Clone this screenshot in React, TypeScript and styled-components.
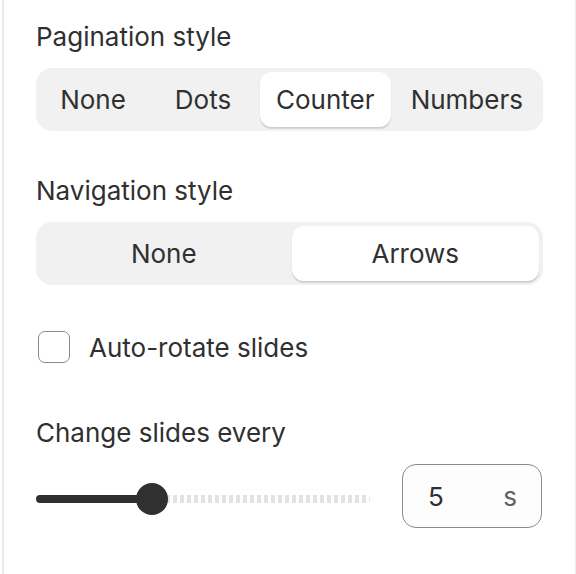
import React, { useState } from "react";
import styled, { createGlobalStyle } from "styled-components";

const Global = createGlobalStyle`
  html, body { margin: 0; padding: 0; background: #ffffff; }
  body { font-family: Inter, "Noto Sans", "Liberation Sans", sans-serif; color: #303030; }
  * { box-sizing: border-box; }
`;

const Panel = styled.div`
  margin-left: 2px;
  width: 574px;
  height: 574px;
  border-left: 2px solid #ebebeb;
  border-right: 1px solid #ededed;
  padding: 22px 32px 0 32px;
  display: flex;
  flex-direction: column;
`;

const Section = styled.div<{ $top?: number }>`
  display: flex;
  flex-direction: column;
  gap: 16px;
  margin-top: ${(p) => p.$top ?? 0}px;
`;

const Label = styled.div`
  font-size: 26px;
  line-height: 30px;
  color: #303030;
`;

const Segmented = styled.div`
  display: flex;
  gap: 4px;
  height: 63px;
  padding: 4px;
  background: #f1f1f1;
  border-radius: 16px;
`;

const Segment = styled.button<{ $active?: boolean; $equal?: boolean }>`
  flex: ${(p) => (p.$equal ? "1 1 0" : "1 0 auto")};
  min-width: ${(p) => (p.$equal ? "0" : "106px")};
  padding: 0 16px;
  border: none;
  border-radius: 12px;
  font-family: inherit;
  font-size: 26px;
  color: #303030;
  background: ${(p) => (p.$active ? "#ffffff" : "transparent")};
  box-shadow: ${(p) =>
    p.$active ? "0 2px 1px -0.5px rgba(0,0,0,0.10), 0 1px 2px rgba(0,0,0,0.06)" : "none"};
  cursor: pointer;
`;

const CheckRow = styled.label`
  display: flex;
  align-items: center;
  gap: 19px;
  padding-left: 2px;
  height: 32px;
  font-size: 26px;
  color: #303030;
  cursor: pointer;
`;

const Box = styled.span<{ $checked?: boolean }>`
  width: 32px;
  height: 32px;
  border-radius: 7px;
  border: 1.5px solid #8a8a8a;
  background: ${(p) => (p.$checked ? "#303030" : "#ffffff")};
`;

const SliderRow = styled.div`
  display: flex;
  align-items: center;
  gap: 32px;
`;

const Slider = styled.div`
  position: relative;
  flex: 0 0 334px;
  height: 32px;
  display: flex;
  align-items: center;
  margin-top: 6px;
`;

const Filled = styled.div`
  height: 8px;
  background: #303030;
  border-radius: 4px 0 0 4px;
`;

const Rest = styled.div`
  flex: 1;
  height: 8px;
  border-radius: 0 4px 4px 0;
  background: repeating-linear-gradient(
    90deg,
    #e3e3e3 0 4px,
    transparent 4px 7px
  );
`;

const Thumb = styled.div`
  position: absolute;
  top: 0;
  width: 32px;
  height: 32px;
  border-radius: 50%;
  background: #303030;
  transform: translateX(-16px);
`;

const NumberField = styled.div`
  width: 140px;
  height: 64px;
  border: 1px solid #8a8a8a;
  border-radius: 14px;
  background: #fdfdfd;
  display: flex;
  align-items: center;
  justify-content: space-between;
  padding: 0 24px 0 25px;
  font-size: 26px;
`;

const Value = styled.span`
  color: #303030;
`;

const Suffix = styled.span`
  color: #616161;
`;

export default function App() {
  const [pagination, setPagination] = useState("Counter");
  const [nav, setNav] = useState("Arrows");
  const [auto, setAuto] = useState(false);
  const pct = 116 / 334;

  return (
    <>
      <Global />
      <Panel>
        <Section>
          <Label>Pagination style</Label>
          <Segmented>
            {["None", "Dots", "Counter", "Numbers"].map((o) => (
              <Segment key={o} $active={pagination === o} onClick={() => setPagination(o)}>
                {o}
              </Segment>
            ))}
          </Segmented>
        </Section>
        <Section $top={45}>
          <Label>Navigation style</Label>
          <Segmented>
            {["None", "Arrows"].map((o) => (
              <Segment key={o} $equal $active={nav === o} onClick={() => setNav(o)}>
                {o}
              </Segment>
            ))}
          </Segmented>
        </Section>
        <Section $top={46}>
          <CheckRow onClick={() => setAuto(!auto)}>
            <Box $checked={auto} />
            Auto-rotate slides
          </CheckRow>
        </Section>
        <Section $top={55}>
          <Label>Change slides every</Label>
          <SliderRow>
            <Slider>
              <Filled style={{ width: `${pct * 100}%` }} />
              <Rest />
              <Thumb style={{ left: `${pct * 100}%` }} />
            </Slider>
            <NumberField>
              <Value>5</Value>
              <Suffix>s</Suffix>
            </NumberField>
          </SliderRow>
        </Section>
      </Panel>
    </>
  );
}
